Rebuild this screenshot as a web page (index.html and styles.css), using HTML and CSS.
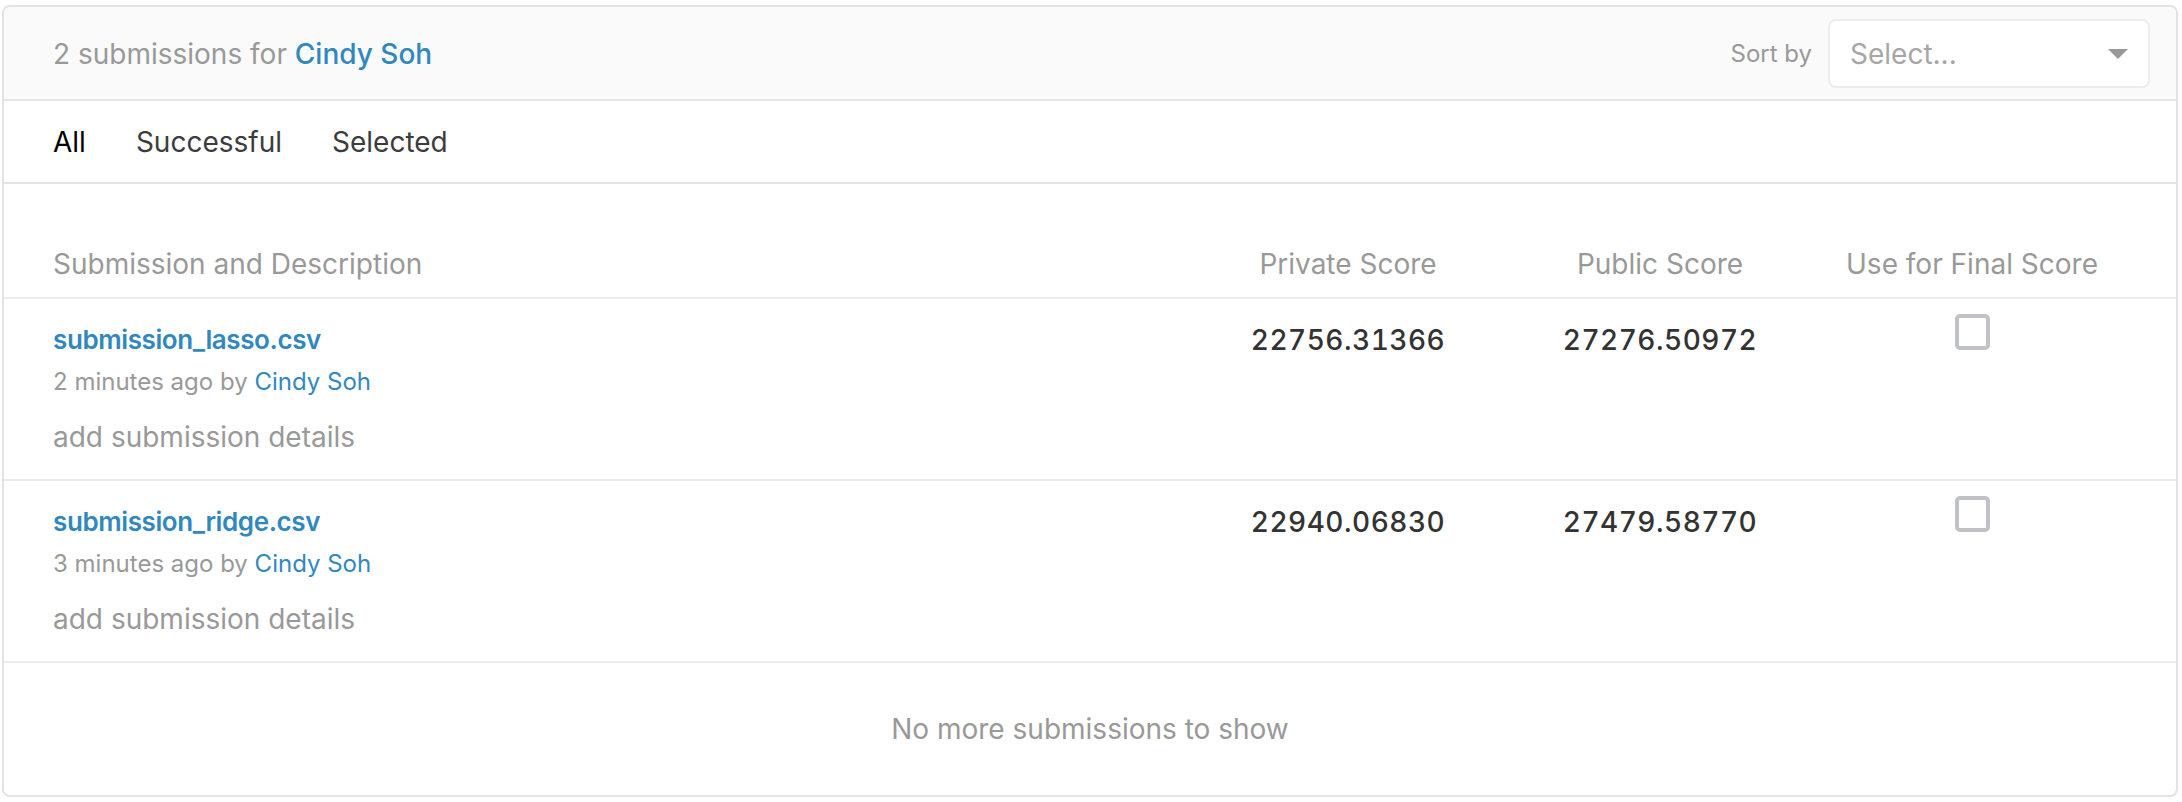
FILE: index.html
```html
<!DOCTYPE html>
<html lang="en">
<head>
<meta charset="utf-8">
<title>Submissions</title>
<link rel="stylesheet" href="styles.css">
</head>
<body>
<div class="card">
  <div class="card-header">
    <div class="title">2 submissions for <a class="link strong" href="#">Cindy Soh</a></div>
    <div class="sort">
      <span class="sort-label">Sort by</span>
      <div class="select">
        <span class="select-placeholder">Select...</span>
        <span class="select-arrow"></span>
      </div>
    </div>
  </div>
  <div class="tabs">
    <span class="tab active">All</span>
    <span class="tab">Successful</span>
    <span class="tab">Selected</span>
  </div>
  <div class="table">
    <div class="row head">
      <div class="cell desc">Submission and Description</div>
      <div class="cell num">Private Score</div>
      <div class="cell num">Public Score</div>
      <div class="cell num">Use for Final Score</div>
    </div>
    <div class="row item">
      <div class="cell desc">
        <a class="file" href="#">submission_lasso.csv</a>
        <div class="meta">2 minutes ago by <a class="link" href="#">Cindy Soh</a></div>
        <div class="details">add submission details</div>
      </div>
      <div class="cell num score">22756.31366</div>
      <div class="cell num score">27276.50972</div>
      <div class="cell num"><span class="checkbox"></span></div>
    </div>
    <div class="row item">
      <div class="cell desc">
        <a class="file" href="#">submission_ridge.csv</a>
        <div class="meta">3 minutes ago by <a class="link" href="#">Cindy Soh</a></div>
        <div class="details">add submission details</div>
      </div>
      <div class="cell num score">22940.06830</div>
      <div class="cell num score">27479.58770</div>
      <div class="cell num"><span class="checkbox"></span></div>
    </div>
  </div>
  <div class="footer">No more submissions to show</div>
</div>
</body>
</html>
```
FILE: styles.css
```css
* { box-sizing: border-box; }
html, body { margin: 0; background: #ffffff; }
body {
  padding: 5px 4px 0 2px;
  font-family: Inter, "Noto Sans", "Liberation Sans", sans-serif;
  color: #3c3c3c;
}
a { text-decoration: none; }
.card {
  border: 2px solid #e3e3e3;
  border-radius: 8px;
  overflow: hidden;
  height: 792px;
  display: flex;
  flex-direction: column;
}
.card-header {
  background: #fafafa;
  border-bottom: 2px solid #e6e6e6;
  display: flex;
  align-items: center;
  justify-content: space-between;
  padding: 12px 26px 11px 49px;
}
.title {
  font-size: 28px;
  color: #999999;
}
.link { color: #3088bf; }
.strong { font-weight: 500; }
.sort { display: flex; align-items: center; gap: 16px; }
.sort-label { font-size: 24px; color: #999999; }
.select {
  width: 322px;
  height: 69px;
  background: #ffffff;
  border: 2px solid #ededed;
  border-radius: 8px;
  display: flex;
  align-items: center;
  justify-content: space-between;
  padding: 0 20px 0 20px;
}
.select-placeholder { font-size: 28px; color: #a6a6a6; }
.select-arrow {
  width: 0; height: 0;
  border-left: 10px solid transparent;
  border-right: 10px solid transparent;
  border-top: 10px solid #999999;
}
.tabs {
  display: flex;
  gap: 50px;
  padding: 0 49px;
  height: 83px;
  align-items: center;
  border-bottom: 2px solid #e3e3e3;
}
.tab { font-size: 28px; color: #3c3c3c; }
.tab.active { color: #000000; }
.row {
  display: grid;
  grid-template-columns: 1fr 312px 312px 312px;
  padding: 0 48px 0 49px;
  border-bottom: 2px solid #ececec;
}
.row.head { padding-top: 62px; padding-bottom: 15px; }
.row.head .cell { font-size: 28px; color: #999999; line-height: 36px; }
.row.item { height: 182px; padding-top: 23px; }
.cell.num { text-align: center; }
.file {
  display: block;
  font-size: 26px;
  font-weight: 600;
  letter-spacing: -0.4px;
  color: #3088bf;
  line-height: 36px;
}
.meta { font-size: 24px; color: #999999; line-height: 30px; margin-top: 9px; }
.details { font-size: 28px; color: #999999; line-height: 36px; margin-top: 22px; }
.score {
  font-size: 28px;
  font-weight: 500;
  color: #333333;
  line-height: 36px;
  font-variant-numeric: tabular-nums;
  letter-spacing: 0.5px;
}
.checkbox {
  display: inline-block;
  width: 35px; height: 36px;
  border: 4px solid #c0c2c6;
  border-radius: 5px;
  margin-top: -8px;
}
.footer {
  flex: 1;
  display: flex;
  align-items: center;
  justify-content: center;
  font-size: 28px;
  color: #999999;
}
```
